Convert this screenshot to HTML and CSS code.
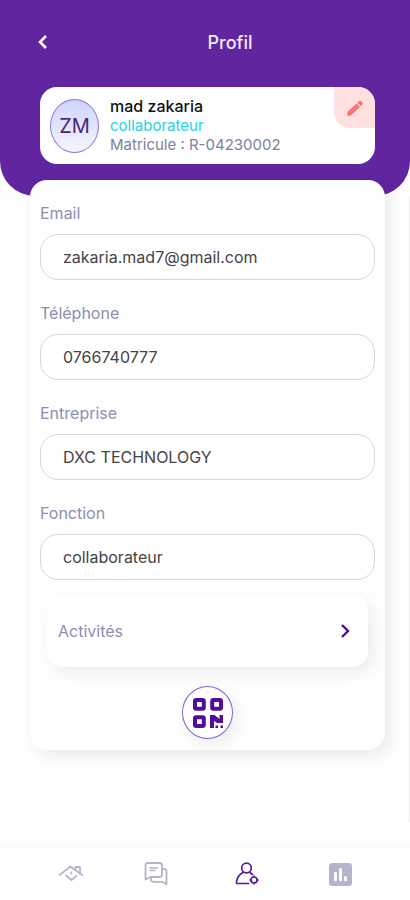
FILE: index.html
```html
<!DOCTYPE html>
<html lang="fr">
<head>
<meta charset="utf-8">
<meta name="viewport" content="width=device-width, initial-scale=1">
<title>Profil</title>
<link rel="stylesheet" href="styles.css">
</head>
<body>
<div class="screen">
  <header class="hero">
    <div class="topbar">
      <button class="back" type="button" aria-label="Retour">
        <svg width="14" height="18" viewBox="0 0 14 18"><path d="M11 3 5 9l6 6" fill="none" stroke="currentColor" stroke-width="2.6"/></svg>
      </button>
      <h1 class="title">Profil</h1>
    </div>
    <section class="identity">
      <div class="avatar">ZM</div>
      <div class="who">
        <p class="name">mad zakaria</p>
        <p class="role">collaborateur</p>
        <p class="number">Matricule : R-04230002</p>
      </div>
      <button class="edit" type="button" aria-label="Modifier">
        <svg width="18" height="18" viewBox="0 0 18 18" fill="currentColor"><path d="M1.300 17l.5-4.200 8.900-8.300 3.200 3.400-8.800 8.200z"/><path d="M11.500 3.700l1.600-1.500q1-.9 1.900 0l1.300 1.400q.9 1-.1 1.900l-1.600 1.500z"/><path d="M4.500 13.500l6.500-6" stroke="#ff9c92" stroke-width="1"/></svg>
      </button>
    </section>
  </header>

  <main class="content">
    <form class="panel">
      <div class="field">
        <label for="email">Email</label>
        <input id="email" type="email" value="zakaria.mad7@gmail.com">
      </div>
      <div class="field">
        <label for="phone">Téléphone</label>
        <input id="phone" type="tel" value="0766740777">
      </div>
      <div class="field">
        <label for="company">Entreprise</label>
        <input id="company" type="text" value="DXC TECHNOLOGY">
      </div>
      <div class="field">
        <label for="job">Fonction</label>
        <input id="job" type="text" value="collaborateur">
      </div>
      <a class="activities" href="#activites">
        <span>Activités</span>
        <svg width="12" height="16" viewBox="0 0 12 16"><path d="M2 2l6 6-6 6" fill="none" stroke="currentColor" stroke-width="2.4"/></svg>
      </a>
      <button class="qr" type="button" aria-label="Code QR">
        <svg width="30" height="30" viewBox="0 0 30 30">
          <g fill="none" stroke="currentColor" stroke-width="4">
            <rect x="2" y="2" width="8.800" height="8.800" rx="1.200"/>
            <rect x="19.200" y="2" width="8.800" height="8.800" rx="1.200"/>
            <rect x="2" y="19.200" width="8.800" height="8.800" rx="1.200"/>
          </g>
          <path fill="currentColor" d="M17 17h4.500l5 4V17H30v8h-6l-3-2v7h-4zM22.500 27.500H25V30h-2.500zM27.500 27.500H30V30h-2.500z"/>
        </svg>
      </button>
    </form>
  </main>

  <nav class="tabs">
    <a href="#accueil" aria-label="Accueil">
      <svg width="28" height="28" viewBox="0 0 28 28" fill="none" stroke="currentColor" stroke-width="1.800" stroke-linejoin="round"><path d="M2 15.500 13.500 6.500l5 3.800V7h4.500v6.500l3 2"/><path d="M8.500 15l6 5 5.500-4.500M19 10.500l4 3"/><path d="M14.200 11.500v3M12.700 13h3" stroke-width="1"/></svg>
    </a>
    <a href="#messages" aria-label="Messages">
      <svg width="28" height="28" viewBox="0 0 28 28" fill="none" stroke="currentColor" stroke-width="1.800" stroke-linejoin="round"><path d="M6 3h11.500q2.500 0 2.500 2.500v9q0 2.500-2.500 2.500H8.500L3.500 19.500V5.500Q3.500 3 6 3z"/><path d="M20.500 9h1.500q2.500 0 2.500 2.500v13l-4-2.700h-9q-2.500 0-2.500-2.500V17.500"/><path d="M7.500 8h8.500M7.500 10.500h6" stroke-width="1.300"/></svg>
    </a>
    <a class="active" href="#profil" aria-label="Profil" aria-current="page">
      <svg width="28" height="28" viewBox="0 0 28 28" fill="none" stroke="currentColor" stroke-width="1.700" stroke-linecap="round"><circle cx="13.500" cy="8" r="4.800"/><path d="M15.500 23.500H4.500Q3.200 23.500 3.500 21.500 4.500 15.500 10 12.500M17 12.500l2.500 2.200"/><circle cx="21" cy="20" r="3"/><path d="M21 15.800v1M21 23.200v1M16.800 20h1M24.200 20h1" stroke-width="1.300"/></svg>
    </a>
    <a href="#statistiques" aria-label="Statistiques">
      <svg width="28" height="28" viewBox="0 0 28 28"><rect x="3" y="3" width="23" height="23" rx="3.500" fill="currentColor"/><path d="M9.500 13.500v6.500M14.500 9.500V20M19.500 17.500V20" fill="none" stroke="#fff" stroke-width="2.800" stroke-linecap="round"/></svg>
    </a>
  </nav>
</div>
</body>
</html>
```
FILE: styles.css
```css
* {
  box-sizing: border-box;
}

body {
  margin: 0;
  background: #fefefe;
  color: #333;
  font-family: Inter, "Liberation Sans", sans-serif;
}

button {
  padding: 0;
  border: 0;
  background: none;
  cursor: pointer;
}

svg {
  display: block;
}

.screen {
  display: flex;
  flex-direction: column;
  min-height: 100vh;
}

.hero {
  padding: 28px 35px 32px;
  border-radius: 0 0 35px 35px;
  background: #60259f;
}

.topbar {
  display: grid;
  grid-template-columns: 16px 1fr 16px;
  align-items: center;
  height: 28px;
  margin-bottom: 31px;
}

.back {
  color: #fff;
}

.title {
  margin: 0;
  padding-left: 50px;
  color: #f3e8ff;
  font-size: 18px;
  font-weight: 500;
  text-align: center;
}

.identity {
  display: flex;
  align-items: center;
  gap: 11px;
  position: relative;
  min-height: 77px;
  margin: 0 0 0 5px;
  padding: 8px 10px;
  border-radius: 17px;
  background: #fff;
  overflow: hidden;
}

.avatar {
  display: grid;
  place-items: center;
  width: 49px;
  height: 54px;
  border: 1px solid #8577e0;
  border-radius: 50%;
  background: linear-gradient(#cfd3fb, #f5f6fe);
  color: #4b2673;
  font-size: 20px;
}

.who p {
  margin: 0;
  line-height: 19px;
}

.who .name {
  color: #111;
  font-size: 16px;
  font-weight: 500;
}

.who .role {
  color: #22d3e6;
  font-size: 15px;
}

.who .number {
  color: #8080a0;
  font-size: 15px;
}

.edit {
  position: absolute;
  top: 0;
  right: 0;
  display: grid;
  place-items: center;
  width: 41px;
  height: 41px;
  border-bottom-left-radius: 16px;
  background: #ffe0de;
  color: #ff6b5e;
}

.content {
  flex: 1;
  margin-bottom: 26px;
  padding: 0 24px 0 30px;
  border-right: 1px solid #efeff1;
}

.panel {
  display: flex;
  flex-direction: column;
  margin-top: -16px;
  padding: 22px 10px 11px;
  border-radius: 17px;
  background: #fefefe;
  box-shadow: 6px 6px 16px rgba(0, 0, 0, 0.08);
}

.field {
  display: flex;
  flex-direction: column;
  gap: 10px;
  margin-bottom: 22px;
}

.field label {
  color: #8c8fae;
  font-size: 16px;
  line-height: 22px;
}

.field input {
  width: 100%;
  height: 46px;
  padding: 0 22px;
  border: 1px solid #d5d6dd;
  border-radius: 18px;
  background: #fff;
  color: #444;
  font: inherit;
  font-size: 16px;
}

.activities {
  display: flex;
  align-items: center;
  justify-content: space-between;
  height: 72px;
  margin: -7px 7px 19px;
  padding: 0 16px 0 11px;
  border-radius: 15px;
  background: #fff;
  box-shadow: 5px 6px 16px rgba(0, 0, 0, 0.07);
  color: #8c8fae;
  font-size: 16px;
  text-decoration: none;
}

.activities svg {
  color: #4f0d99;
}

.qr {
  display: grid;
  place-items: center;
  align-self: center;
  width: 51px;
  height: 53px;
  border: 1px solid #7a63dc;
  border-radius: 50%;
  background: #fff;
  box-shadow: 5px 6px 16px rgba(0, 0, 0, 0.07);
  color: #4f0d99;
}

.tabs {
  display: grid;
  grid-template-columns: 85fr 91fr 93fr 28px;
  padding: 12px 56px 12px 57px;
  background: #fff;
  box-shadow: 0 -2px 8px rgba(0, 0, 0, 0.03);
}

.tabs a {
  color: #b3b5ca;
}

.tabs .active {
  color: #5a189a;
}
```
